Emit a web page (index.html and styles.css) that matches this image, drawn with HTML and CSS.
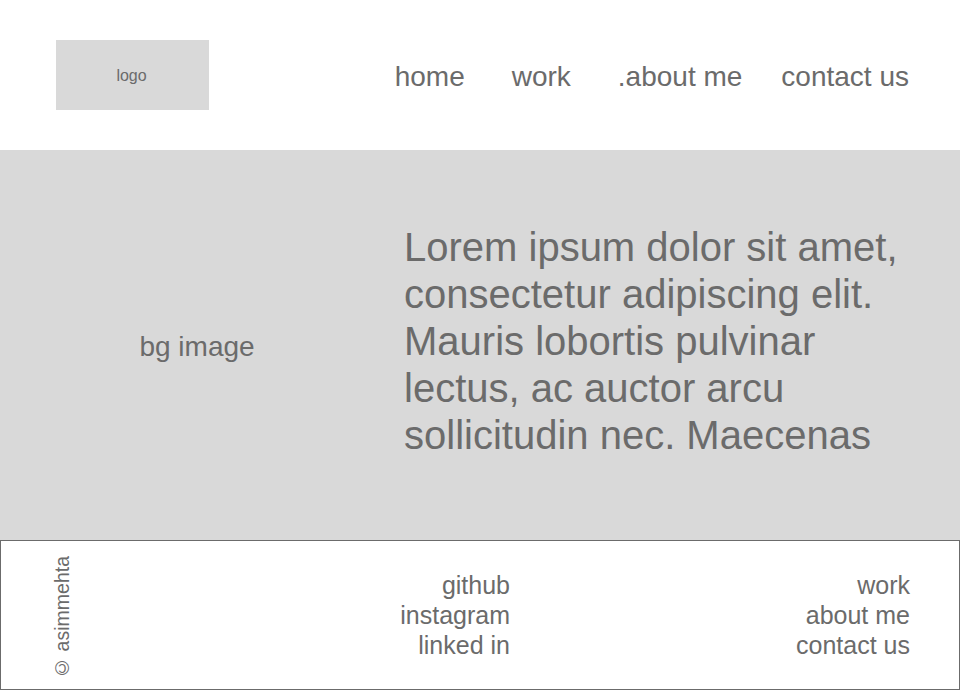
FILE: index.html
```html
<!DOCTYPE html>
<html lang="en">
<head>
<meta charset="utf-8">
<title>asimmehta</title>
<link rel="stylesheet" href="styles.css">
</head>
<body>
<header class="site-header">
  <div class="logo">logo</div>
  <nav class="main-nav">
    <a class="nav-link" href="#">home</a>
    <a class="nav-link" href="#">work</a>
    <a class="nav-link" href="#">.about me</a>
    <a class="nav-link nav-link--last" href="#">contact us</a>
  </nav>
</header>
<section class="hero">
  <div class="hero-bg">bg image</div>
  <p class="hero-text">Lorem ipsum dolor sit amet, consectetur adipiscing elit. Mauris lobortis pulvinar lectus, ac auctor arcu sollicitudin nec. Maecenas</p>
</section>
<footer class="site-footer">
  <div class="copyright-col"><span class="copyright">© asimmehta</span></div>
  <ul class="footer-list footer-social">
    <li>github</li>
    <li>instagram</li>
    <li>linked in</li>
  </ul>
  <ul class="footer-list footer-nav">
    <li>work</li>
    <li>about me</li>
    <li>contact us</li>
  </ul>
</footer>
</body>
</html>
```
FILE: styles.css
```css
* { box-sizing: border-box; }
html, body {
  margin: 0;
  padding: 0;
  width: 960px;
  height: 690px;
  overflow: hidden;
  background: #ffffff;
  font-family: "Liberation Sans", Arial, sans-serif;
  color: #6b6b6b;
}

.site-header {
  height: 150px;
  display: flex;
  align-items: center;
  justify-content: space-between;
  padding: 0 51px 0 56px;
}
.logo {
  width: 153px;
  height: 70px;
  background: #d9d9d9;
  display: flex;
  align-items: center;
  justify-content: center;
  font-size: 16px;
  padding-right: 2px;
  padding-top: 2px;
}
.main-nav {
  display: flex;
  align-items: center;
  gap: 47px;
  margin-top: 4px;
}
.nav-link {
  color: #6b6b6b;
  text-decoration: none;
  font-size: 28px;
  line-height: 32px;
}
.nav-link--last { margin-left: -8px; }

.hero {
  height: 390px;
  background: #d9d9d9;
  display: flex;
  align-items: center;
  padding-right: 51px;
}
.hero-bg {
  width: 394px;
  flex: none;
  text-align: center;
  font-size: 28px;
  line-height: 32px;
  padding-top: 3px;
}
.hero-text {
  margin: 0 0 8px 10px;
  width: 505px;
  font-size: 40px;
  line-height: 47px;
}

.site-footer {
  height: 150px;
  border: 1px solid #6b6b6b;
  display: flex;
  align-items: center;
  padding-right: 49px;
}
.copyright-col {
  width: 122px;
  flex: none;
  display: flex;
  justify-content: center;
  padding-top: 4px;
}
.copyright {
  writing-mode: vertical-rl;
  transform: rotate(180deg);
  font-size: 19.5px;
  line-height: 20px;
}
.footer-list {
  list-style: none;
  margin: 0;
  padding: 0;
  font-size: 25px;
  line-height: 30px;
  text-align: right;
}
.footer-social {
  width: 387px;
  flex: none;
}
.footer-nav {
  flex: 1;
}
```
